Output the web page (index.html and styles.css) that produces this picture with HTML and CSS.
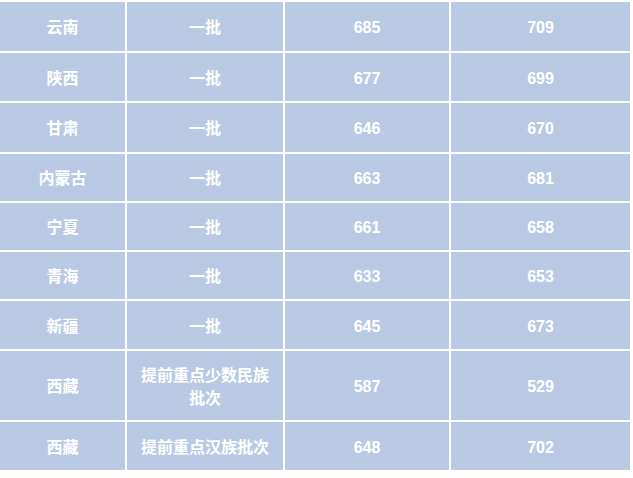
FILE: index.html
```html
<!DOCTYPE html>
<html lang="zh">
<head>
<meta charset="utf-8">
<link rel="stylesheet" href="styles.css">
</head>
<body>
<div class="table">
  <div class="cell">云南</div><div class="cell">一批</div><div class="cell">685</div><div class="cell">709</div>
  <div class="cell">陕西</div><div class="cell">一批</div><div class="cell">677</div><div class="cell">699</div>
  <div class="cell">甘肃</div><div class="cell">一批</div><div class="cell">646</div><div class="cell">670</div>
  <div class="cell">内蒙古</div><div class="cell">一批</div><div class="cell">663</div><div class="cell">681</div>
  <div class="cell">宁夏</div><div class="cell">一批</div><div class="cell">661</div><div class="cell">658</div>
  <div class="cell">青海</div><div class="cell">一批</div><div class="cell">633</div><div class="cell">653</div>
  <div class="cell">新疆</div><div class="cell">一批</div><div class="cell">645</div><div class="cell">673</div>
  <div class="cell">西藏</div><div class="cell">提前重点少数民族<br>批次</div><div class="cell">587</div><div class="cell">529</div>
  <div class="cell">西藏</div><div class="cell">提前重点汉族批次</div><div class="cell">648</div><div class="cell">702</div>
</div>
</body>
</html>
```

FILE: styles.css
```css
html, body {
  margin: 0;
  padding: 0;
  background: #ffffff;
}
.table {
  display: grid;
  grid-template-columns: 125px 156px 164px 179px;
  grid-template-rows: 49px 48px 49px 47px 47px 47px 48px 69px 48px;
  gap: 2px;
  padding-top: 2px;
  width: 630px;
  background: #ffffff;
  font-family: "Liberation Sans", "Noto Sans CJK SC", sans-serif;
  font-weight: bold;
  font-size: 16px;
  color: #ffffff;
}
.cell {
  background: #b9c9e4;
  display: flex;
  align-items: center;
  justify-content: center;
  text-align: center;
  line-height: 23px;
  padding-top: 2px;
}
```
